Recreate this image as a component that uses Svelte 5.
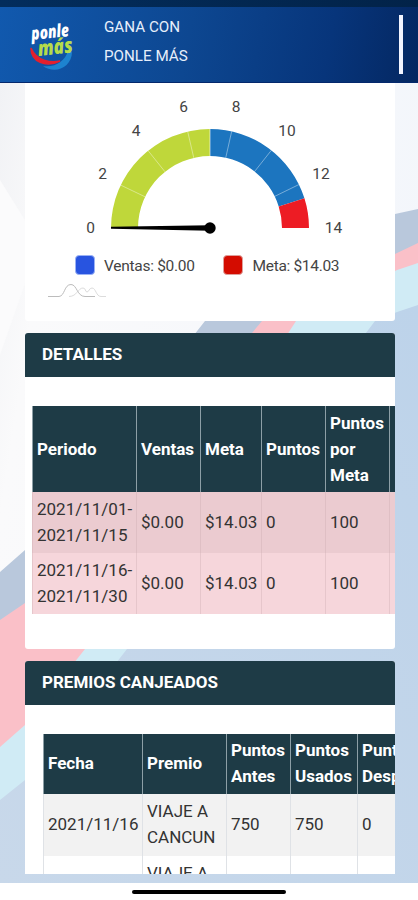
<script>
	const MAX = 14.03;
	const cx = 185;
	const cy = 145;
	const outer = 99;
	const inner = 72;

	const ranges = [
		{ from: 0, to: MAX / 2, color: "#bfd73a" },
		{ from: MAX / 2, to: MAX * 0.903, color: "#1c75bf" },
		{ from: MAX * 0.903, to: MAX, color: "#ed1c24" }
	];

	const ticks = [2, 4, 6, 8, 10, 12];

	const labels = [
		{ value: 0, x: 65.5, y: 144.5 },
		{ value: 2, x: 77.5, y: 91 },
		{ value: 4, x: 111, y: 47.5 },
		{ value: 6, x: 158.5, y: 23.5 },
		{ value: 8, x: 211, y: 23.5 },
		{ value: 10, x: 262, y: 47.5 },
		{ value: 12, x: 296, y: 91 },
		{ value: 14, x: 308.5, y: 144.5 }
	];

	const periods = [
		["2021/11/01-", "2021/11/15"],
		["2021/11/16-", "2021/11/30"]
	];

	const prizes = ["2021/11/16", "2021/11/16"];

	function point(value, r) {
		const a = Math.PI * (1 - value / MAX);
		return `${cx + r * Math.cos(a)} ${cy - r * Math.sin(a)}`;
	}

	function arc({ from, to }) {
		return `M${point(from, outer)} A${outer} ${outer} 0 0 1 ${point(to, outer)} L${point(to, inner)} A${inner} ${inner} 0 0 0 ${point(from, inner)}Z`;
	}
</script>

<div class="screen">
	<div class="status"></div>
	<header>
		<svg class="logo" viewBox="0 0 46 50" width="46" height="50">
			<path d="M2 26C2 40 17 46 31 39C23 41 8 40 2 26Z" fill="#e3202e" stroke="#e3202e" stroke-width="1.5" />
			<path d="M14 44C26 46 36 39 39 29L43 30C43 45 26 53 14 44Z" fill="#1d83cf" />
			<g transform="rotate(-6 3 20)">
				<text class="brand" x="3" y="18" font-size="18" textLength="38" lengthAdjust="spacingAndGlyphs" fill="#fff">ponle</text>
				<text class="brand" x="8" y="34.5" font-size="21" textLength="35" lengthAdjust="spacingAndGlyphs" fill="#b5dc4b">más</text>
			</g>
		</svg>
		<h1>GANA CON<br />PONLE MÁS</h1>
		<span class="menu"></span>
	</header>

	<main>
		<svg class="backdrop" viewBox="0 83 418 800" width="418" height="800" aria-hidden="true">
			<defs>
				<linearGradient id="pale" x1="0" y1="0" x2="1" y2="0.3">
					<stop offset="0" stop-color="#f1f2f5" />
					<stop offset="0.15" stop-color="#fafafb" />
					<stop offset="1" stop-color="#f3f6fb" />
				</linearGradient>
				<linearGradient id="sky" x1="0" y1="1" x2="1" y2="0">
					<stop offset="0" stop-color="#c8d8ea" />
					<stop offset="1" stop-color="#bdd3ea" />
				</linearGradient>
			</defs>
			<rect y="83" width="418" height="800" fill="url(#pale)" />
			<path d="M0 180L28 225V275L0 355Z" fill="#fbfbfc" />
			<path d="M418 209L395 214L205 321L25 550L0 572V883H418Z" fill="#b9c8dc" />
			<path d="M418 243L397 253L262 321L25 603L0 620V883H418Z" fill="#fac0c8" />
			<path d="M418 263L397 270L296 321L85 649L25 725L0 747V883H418Z" fill="#d0ebf5" />
			<path d="M418 305L397 312L375 321L127 649L25 780L0 800V883H418Z" fill="url(#sky)" />
		</svg>

		<div class="content">
			<section class="card chart">
				<svg width="370" height="238" viewBox="0 0 370 238">
					{#each ranges as range}
						<path d={arc(range)} fill={range.color} />
					{/each}
					{#each ticks as tick}
						<path d="M{point(tick, inner)}L{point(tick, outer)}" stroke="#fff" stroke-opacity="0.4" />
					{/each}
					<path d="M{point(MAX / 2, inner)}V{cy - outer}" stroke="#fff" stroke-opacity="0.6" />
					{#each labels as label}
						<text class="label" x={label.x} y={label.y + 5} text-anchor="middle">{label.value}</text>
					{/each}
					<path d="M86 143.8L185 142.3V147.7L86 145.8Z" fill="#000" />
					<circle {cx} {cy} r="5.7" fill="#000" />

					<rect x="50.5" y="172.5" width="19" height="19" rx="3.5" fill="#2854e0" stroke="#9bb2f5" />
					<text class="label" x="79" y="187.5" textLength="91">Ventas: $0.00</text>
					<rect x="198.5" y="172.5" width="19" height="19" rx="3.5" fill="#d40c00" stroke="#dfa09c" />
					<text class="label" x="227.5" y="187.5" textLength="87">Meta: $14.03</text>

					<g fill="none">
						<path d="M44 213.5C52 213.5 53 205 58 205C61 205 60 209 62 209C64 209 64 205 67 205C71 205 71 213.5 76 213.5H81" stroke="#dcdcdc" />
						<path d="M23 213.5H34C40 213 39 201.5 46 201.5C52 201.5 52 213.5 60 213.5H70" stroke="#bcbcbc" />
					</g>
				</svg>
			</section>

			<section class="card details">
				<h2>DETALLES</h2>
				<table class="periods">
					<colgroup>
						<col class="period" /><col class="sales" /><col class="goal" /><col class="points" /><col class="points" /><col class="rest" />
					</colgroup>
					<thead>
						<tr>
							<th>Periodo</th>
							<th>Ventas</th>
							<th>Meta</th>
							<th>Puntos</th>
							<th>Puntos<br />por<br />Meta</th>
							<th></th>
						</tr>
					</thead>
					<tbody>
						{#each periods as [start, end]}
							<tr>
								<td>{start}<br />{end}</td>
								<td>$0.00</td>
								<td>$14.03</td>
								<td>0</td>
								<td>100</td>
								<td></td>
							</tr>
						{/each}
					</tbody>
				</table>
			</section>

			<section class="card prizes-card">
				<h2>PREMIOS CANJEADOS</h2>
				<table class="prizes">
					<colgroup>
						<col class="date" /><col class="prize" /><col class="before" /><col class="used" /><col class="after" />
					</colgroup>
					<thead>
						<tr>
							<th>Fecha</th>
							<th>Premio</th>
							<th>Puntos<br />Antes</th>
							<th>Puntos<br />Usados</th>
							<th>Puntos<br />Después</th>
						</tr>
					</thead>
					<tbody>
						{#each prizes as date, i}
							<tr>
								<td>{i === 0 ? date : ""}</td>
								<td>VIAJE A<br />CANCUN</td>
								<td>{i === 0 ? 750 : ""}</td>
								<td>{i === 0 ? 750 : ""}</td>
								<td>{i === 0 ? 0 : ""}</td>
							</tr>
						{/each}
					</tbody>
				</table>
			</section>
		</div>
	</main>

	<footer><span></span></footer>
</div>

<style>
	:global(body) {
		margin: 0;
		background: #fff;
	}

	.screen {
		display: flex;
		flex-direction: column;
		width: 418px;
		height: 900px;
		overflow: hidden;
		font-family: Roboto, "Liberation Sans", sans-serif;
		font-size: 17px;
		color: #333;
	}

	.status {
		flex: 0 0 7px;
		background: linear-gradient(to right, #032d5c, #022349);
	}

	header {
		display: flex;
		flex: 0 0 76px;
		box-sizing: border-box;
		align-items: center;
		padding: 0 16px 0 29px;
		background: linear-gradient(100deg, #1159ae, #0d4791 45%, #07357b 78%, #042761);
		border-bottom: 1px solid #04286c;
	}

	.logo {
		margin-top: 4px;
		overflow: visible;
	}

	.brand {
		font-family: "Open Sans", sans-serif;
		font-weight: 800;
		font-style: italic;
	}

	h1 {
		flex: 1;
		margin: 0 0 5px 29px;
		font-size: 15.2px;
		font-weight: 400;
		line-height: 29px;
		color: #e6effb;
	}

	.menu {
		width: 4px;
		height: 59px;
		margin-right: -1px;
		background: #f2f4ff;
	}

	main {
		position: relative;
		flex: 0 0 800px;
		overflow: hidden;
	}

	.backdrop {
		position: absolute;
		inset: 0;
	}

	.content {
		position: relative;
		display: flex;
		flex-direction: column;
		gap: 12px;
		width: 370px;
		height: 791px;
		margin-left: 25px;
		overflow: hidden;
	}

	.card {
		flex: none;
		overflow: hidden;
		background: #fff;
		border-radius: 3px;
	}

	.chart {
		height: 238px;
		border-radius: 0 0 3px 3px;
	}

	.chart svg {
		display: block;
	}

	.label {
		font-size: 15.5px;
		fill: #444;
	}

	.details {
		height: 316px;
	}

	.prizes-card {
		height: 320px;
	}

	h2 {
		height: 44px;
		margin: 0;
		padding-left: 17px;
		font-size: 17px;
		font-weight: 700;
		line-height: 43px;
		color: #fff;
		background: #1e3b46;
	}

	table {
		table-layout: fixed;
		border-collapse: collapse;
		line-height: 26px;
	}

	th,
	td {
		box-sizing: border-box;
		padding: 0 4px 2px;
		text-align: left;
		white-space: nowrap;
		border-left: 1px solid;
	}

	th {
		font-weight: 700;
		color: #fff;
		background: #1e3b46;
		border-color: #8d9fa6;
	}

	.periods {
		width: 420px;
		margin: 29px 0 0 7px;
	}

	.periods th {
		height: 86px;
		padding-bottom: 0;
	}

	.periods td {
		height: 61px;
		background: #f6d6db;
		border-color: #e6c6cb;
	}

	.periods tr:first-child td {
		background: #ebcbd0;
		border-color: #dfbfc4;
	}

	.period {
		width: 104px;
	}

	.sales {
		width: 64px;
	}

	.goal {
		width: 61px;
	}

	.points {
		width: 64px;
	}

	.prizes {
		width: 420px;
		margin: 29px 0 0 18px;
	}

	.prizes th {
		height: 60px;
	}

	.prizes td {
		height: 62px;
		border-color: #dfe2e6;
	}

	.prizes tr:first-child td {
		background: #f2f2f2;
	}

	.date {
		width: 99px;
	}

	.prize {
		width: 84px;
	}

	.before {
		width: 64px;
	}

	.used {
		width: 67px;
	}

	footer {
		display: flex;
		flex: 1;
		align-items: center;
		justify-content: center;
		background: #fff;
	}

	footer span {
		width: 154px;
		height: 4px;
		border-radius: 2px;
		background: #000;
	}
</style>
